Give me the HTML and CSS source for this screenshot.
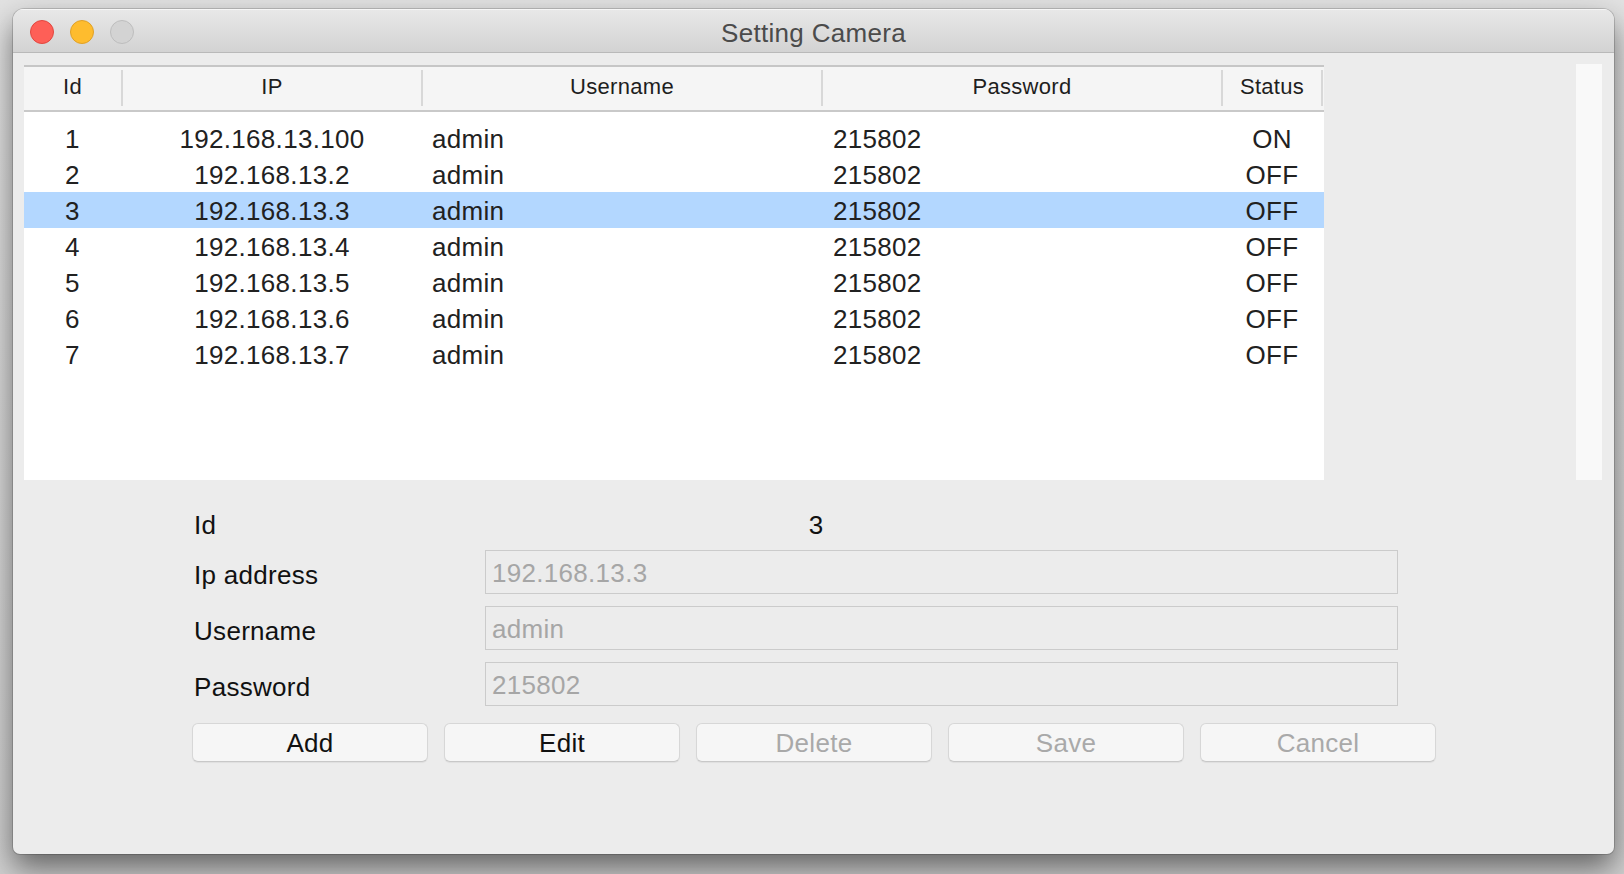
FILE: index.html
```html
<!DOCTYPE html>
<html>
<head>
<meta charset="utf-8">
<title>Setting Camera</title>
<link rel="stylesheet" href="styles.css">
</head>
<body>
<div class="desktop">
  <div class="window">
    <div class="titlebar">
      <div class="lights">
        <span class="light red"></span>
        <span class="light yellow"></span>
        <span class="light gray"></span>
      </div>
      <div class="title">Setting Camera</div>
      <div></div>
    </div>
    <div class="content">
      <div class="top">
        <div class="table">
          <div class="thead">
            <div class="th c-id">Id</div>
            <div class="th c-ip">IP</div>
            <div class="th c-user">Username</div>
            <div class="th c-pass">Password</div>
            <div class="th c-status">Status</div>
          </div>
          <div class="tbody">
            <div class="tr"><div class="td c-id">1</div><div class="td c-ip">192.168.13.100</div><div class="td c-user">admin</div><div class="td c-pass">215802</div><div class="td c-status">ON</div></div>
            <div class="tr"><div class="td c-id">2</div><div class="td c-ip">192.168.13.2</div><div class="td c-user">admin</div><div class="td c-pass">215802</div><div class="td c-status">OFF</div></div>
            <div class="tr selected"><div class="td c-id">3</div><div class="td c-ip">192.168.13.3</div><div class="td c-user">admin</div><div class="td c-pass">215802</div><div class="td c-status">OFF</div></div>
            <div class="tr"><div class="td c-id">4</div><div class="td c-ip">192.168.13.4</div><div class="td c-user">admin</div><div class="td c-pass">215802</div><div class="td c-status">OFF</div></div>
            <div class="tr"><div class="td c-id">5</div><div class="td c-ip">192.168.13.5</div><div class="td c-user">admin</div><div class="td c-pass">215802</div><div class="td c-status">OFF</div></div>
            <div class="tr"><div class="td c-id">6</div><div class="td c-ip">192.168.13.6</div><div class="td c-user">admin</div><div class="td c-pass">215802</div><div class="td c-status">OFF</div></div>
            <div class="tr"><div class="td c-id">7</div><div class="td c-ip">192.168.13.7</div><div class="td c-user">admin</div><div class="td c-pass">215802</div><div class="td c-status">OFF</div></div>
          </div>
        </div>
        <div class="panel"></div>
      </div>

      <div class="form">
        <div class="id-row">
          <div class="label">Id</div>
          <div class="id-value">3</div>
          <div></div>
        </div>
        <div class="fields">
          <div class="label">Ip address</div>
          <input class="field" type="text" value="192.168.13.3" readonly>
          <div class="label">Username</div>
          <input class="field" type="text" value="admin" readonly>
          <div class="label">Password</div>
          <input class="field" type="text" value="215802" readonly>
        </div>
        <div class="buttons">
          <button class="btn">Add</button>
          <button class="btn">Edit</button>
          <button class="btn off">Delete</button>
          <button class="btn off">Save</button>
          <button class="btn off">Cancel</button>
        </div>
      </div>
    </div>
  </div>
</div>
</body>
</html>
```

FILE: styles.css
```css
* { box-sizing: border-box; }

html, body {
  margin: 0;
  padding: 0;
  width: 1624px;
  height: 874px;
  overflow: hidden;
}

body {
  background: linear-gradient(180deg, #e2e2e2 0%, #d0d0d0 100%);
  font-family: "Liberation Sans", Arial, Helvetica, sans-serif;
  color: #222;
}

.desktop {
  padding: 9px 0 0 13px;
}

.window {
  width: 1601px;
  height: 845px;
  background: #ececec;
  border-radius: 11px 11px 7px 7px;
  box-shadow: 0 14px 30px rgba(0, 0, 0, 0.52), 0 0 0 1px rgba(0, 0, 0, 0.16);
  overflow: hidden;
  display: flex;
  flex-direction: column;
}

/* ---------- title bar ---------- */
.titlebar {
  height: 44px;
  flex: none;
  display: grid;
  grid-template-columns: 1fr auto 1fr;
  align-items: center;
  background: linear-gradient(180deg, #e8e8e8 0%, #d3d3d3 100%);
  border-bottom: 1px solid #b9b9b9;
  box-shadow: inset 0 1px 0 rgba(255, 255, 255, 0.6);
}

.lights {
  display: flex;
  gap: 16px;
  padding-left: 17px;
  padding-top: 1px;
}

.light {
  width: 24px;
  height: 24px;
  border-radius: 50%;
  display: block;
}

.light.red { background: #fe5f57; border: 1px solid #e1473f; }
.light.yellow { background: #febc2e; border: 1px solid #dfa028; }
.light.gray { background: #d3d3d3; border: 1px solid #bdbdbd; }

.title {
  font-size: 26px;
  letter-spacing: 0.3px;
  color: #4b4b4b;
  line-height: 40px;
  padding-top: 4px;
}

/* ---------- content ---------- */
.content {
  flex: 1;
  display: flex;
  flex-direction: column;
}

.top {
  display: flex;
  justify-content: space-between;
  align-items: flex-start;
  padding: 12px 12px 0 11px;
}

.table {
  width: 1300px;
  height: 415px;
  background: #ffffff;
  display: flex;
  flex-direction: column;
}

.thead {
  display: flex;
  height: 47px;
  background: #f5f5f5;
  border-top: 2px solid #c6c6c6;
  border-bottom: 2px solid #c9c9c9;
  flex: none;
}

.th {
  margin: 3px 0 4px;
  border-right: 2px solid #d8d8d8;
  text-align: center;
  font-size: 22px;
  letter-spacing: 0.3px;
  line-height: 34px;
  color: #1e1e1e;
}

.c-id { width: 99px; }
.c-ip { width: 300px; }
.c-user { width: 400px; }
.c-pass { width: 400px; }
.c-status { width: 100px; }

.tbody {
  padding-top: 8px;
}

.tr {
  display: flex;
  height: 36px;
}

.tr.selected {
  background: #b3d7ff;
}

.td {
  font-size: 26px;
  letter-spacing: 0.3px;
  line-height: 34px;
  padding-top: 2px;
  color: #212121;
  white-space: nowrap;
}

.td.c-id { text-align: center; padding-right: 2px; }
.td.c-ip { text-align: center; padding-right: 2px; }
.td.c-user { padding-left: 9px; }
.td.c-pass { padding-left: 10px; }
.td.c-status { text-align: center; padding-right: 2px; }

.panel {
  width: 26px;
  height: 416px;
  margin-top: -1px;
  background: #f9f9f9;
}

/* ---------- form ---------- */
.form {
  width: 1244px;
  margin: 27px 0 0 179px;
}

.label {
  font-size: 26px;
  letter-spacing: 0.3px;
  color: #111;
  padding-left: 2px;
}

.id-row {
  display: grid;
  grid-template-columns: 1fr auto 1fr;
  height: 36px;
  line-height: 36px;
  margin-bottom: 7px;
}

.id-value {
  font-size: 26px;
  color: #111;
  padding-left: 4px;
}

.fields {
  display: grid;
  grid-template-columns: 293px 913px;
  grid-auto-rows: 44px;
  row-gap: 12px;
  align-items: center;
}

.fields .label {
  padding-top: 6px;
}

.field {
  height: 44px;
  width: 913px;
  margin: 0;
  border: 1px solid #cbcbcb;
  background: #ececec;
  color: #a6a6a6;
  font-family: inherit;
  font-size: 26px;
  letter-spacing: 0.3px;
  padding: 2px 0 0 6px;
  outline: none;
  border-radius: 0;
}

.buttons {
  display: flex;
  gap: 16px;
  margin-top: 17px;
}

.btn {
  width: 236px;
  height: 39px;
  margin: 0;
  padding: 2px 0 0;
  border: 1px solid #d7d7d7;
  border-bottom-color: #c8c8c8;
  border-radius: 6px;
  background: #f6f6f6;
  box-shadow: 0 1px 1px rgba(0, 0, 0, 0.06);
  font-family: inherit;
  font-size: 26px;
  letter-spacing: 0.3px;
  color: #111;
  line-height: 35px;
}

.btn.off {
  color: #a9a9a9;
}
```
